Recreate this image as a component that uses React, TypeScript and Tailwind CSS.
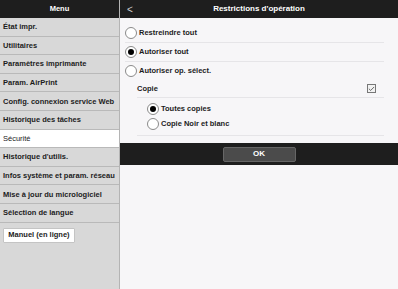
import { Check } from 'lucide-react';

const menuItems = [
  'État impr.',
  'Utilitaires',
  'Paramètres imprimante',
  'Param. AirPrint',
  'Config. connexion service Web',
  'Historique des tâches',
  'Sécurité',
  "Historique d'utilis.",
  'Infos système et param. réseau',
  'Mise à jour du micrologiciel',
  'Sélection de langue',
];

function Radio({ checked }: { checked?: boolean }) {
  return (
    <span className="flex h-[12px] w-[12px] shrink-0 items-center justify-center rounded-full border border-[#8a8a8a] bg-white">
      {checked && <span className="h-[6px] w-[6px] rounded-full bg-black" />}
    </span>
  );
}

export default function App() {
  return (
    <div className="flex h-[289px] w-[398px] overflow-hidden text-[7.5px] font-bold text-[#1c1c1c]" style={{ fontFamily: '"Liberation Sans", Arial, sans-serif' }}>
      <aside className="flex w-[120px] shrink-0 flex-col border-r border-[#b4b4b4] bg-[#d8d8d8]">
        <div className="flex h-[18px] items-center justify-center bg-[#1e1e1e] text-white">Menu</div>
        {menuItems.map((item) => (
          <div
            key={item}
            className={`flex h-[18.6px] items-center border-b border-[#b9b9b9] pl-[3px] ${item === 'Sécurité' ? 'bg-white font-normal' : ''}`}
          >
            {item}
          </div>
        ))}
        <div className="px-[3px] pt-[5px]">
          <button className="h-[15px] w-[72px] rounded-[1px] border border-[#c4c4c4] bg-white text-[7.5px] font-bold">
            Manuel (en ligne)
          </button>
        </div>
      </aside>

      <main className="flex flex-1 flex-col bg-[#f7f6f8]">
        <div className="relative flex h-[18px] items-center justify-center bg-[#1e1e1e] text-white">
          <span className="absolute left-[7px] text-[10px] font-normal text-[#cfcfcf]">&lt;</span>
          <span className="text-[8px]">Restrictions d'opération</span>
        </div>

        <div className="flex flex-col pl-[5px] pr-[14px] pt-[6px]">
          <div className="flex h-[19px] items-center gap-[2px] border-b border-[#e6e5e8]">
            <Radio />
            <span>Restreindre tout</span>
          </div>
          <div className="flex h-[19px] items-center gap-[2px] border-b border-[#e6e5e8]">
            <Radio checked />
            <span>Autoriser tout</span>
          </div>
          <div className="flex h-[18px] items-center gap-[2px]">
            <Radio />
            <span>Autoriser op. sélect.</span>
          </div>
          <div className="ml-[12px] flex h-[18px] items-center justify-between border-b border-[#e6e5e8] pr-[8px]">
            <span>Copie</span>
            <span className="flex h-[9px] w-[9px] items-center justify-center border border-[#777] bg-[#f2f2f2]">
              <Check size={8} strokeWidth={3} className="text-[#555]" />
            </span>
          </div>
          <div className="ml-[12px] flex flex-col border-b border-[#e6e5e8] pb-[4px] pl-[10px] pt-[3px]">
            <div className="flex h-[15px] items-center gap-[2px]">
              <Radio checked />
              <span>Toutes copies</span>
            </div>
            <div className="flex h-[15px] items-center gap-[2px]">
              <Radio />
              <span>Copie Noir et blanc</span>
            </div>
          </div>
        </div>

        <div className="mt-[7px] flex h-[22px] items-center justify-center bg-[#1e1e1e]">
          <button className="h-[15px] w-[73px] rounded-[2px] border border-[#666] bg-[#4b4b4b] text-[8px] font-bold text-white">
            OK
          </button>
        </div>
      </main>
    </div>
  );
}
